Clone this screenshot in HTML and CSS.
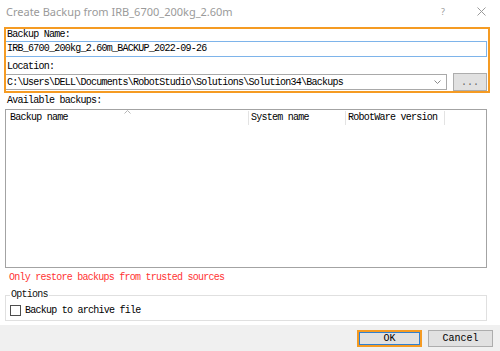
FILE: index.html
```html
<!DOCTYPE html>
<html>
<head>
<meta charset="utf-8">
<link rel="stylesheet" href="styles.css">
</head>
<body>
<div class="window">
  <header class="titlebar">
    <span class="title">Create Backup from IRB_6700_200kg_2.60m</span>
    <span class="help">?</span>
    <svg class="close" width="9" height="9" viewBox="0 0 9 9"><path d="M0.5 0.5L8.5 8.5M8.5 0.5L0.5 8.5" stroke="#9a9a9a" stroke-width="1" fill="none"/></svg>
  </header>
  <main class="content">
    <label class="lbl">Backup Name:</label>
    <div class="textbox">IRB_6700_200kg_2.60m_BACKUP_2022-09-26</div>
    <label class="lbl lbl-gap">Location:</label>
    <div class="loc-row">
      <div class="combo">
        <span class="combo-text">C:\Users\DELL\Documents\RobotStudio\Solutions\Solution34\Backups</span>
        <svg class="chev" width="7" height="4" viewBox="0 0 7 4"><path d="M0.5 0.5L3.5 3.5L6.5 0.5" stroke="#8a8a8a" stroke-width="1" fill="none"/></svg>
      </div>
      <button class="browse">...</button>
    </div>
    <label class="lbl lbl-gap">Available backups:</label>
    <div class="grid">
      <div class="grid-head">
        <div class="col col-name">Backup name
          <svg class="sort" width="7" height="4" viewBox="0 0 7 4"><path d="M0.5 3.5L3.5 0.5L6.5 3.5" stroke="#b5b5b5" stroke-width="1" fill="none"/></svg>
        </div>
        <div class="col col-sys">System name</div>
        <div class="col col-rw">RobotWare version</div>
      </div>
    </div>
    <p class="warning">Only restore backups from trusted sources</p>
    <fieldset class="options">
      <legend>Options</legend>
      <label class="check"><span class="box"></span>Backup to archive file</label>
    </fieldset>
  </main>
  <footer class="buttons">
    <button class="btn ok">OK</button>
    <button class="btn cancel">Cancel</button>
  </footer>
  <div class="highlight"></div>
</div>
</body>
</html>
```

FILE: styles.css
```css
* { box-sizing: border-box; }
html, body { margin: 0; padding: 0; }
body {
  width: 500px;
  height: 351px;
  background: #ffffff;
  font-family: "Liberation Mono", "DejaVu Sans Mono", monospace;
  font-size: 10px;
  letter-spacing: -0.75px;
  color: #000;
  overflow: hidden;
}
.window {
  position: relative;
  width: 500px;
  height: 351px;
  display: flex;
  flex-direction: column;
}
.titlebar {
  height: 22px;
  display: flex;
  align-items: center;
  padding: 0 14px 0 6px;
  font-family: "Noto Sans", "Open Sans", sans-serif;
  letter-spacing: 0;
  color: #9a9a9a;
}
.title { flex: 1; font-size: 11px; }
.help { font-size: 9px; margin-right: 32px; }
.close { display: block; }

.content {
  flex: 1;
  display: flex;
  flex-direction: column;
  padding: 7px 13px 0 5px;
}
.lbl {
  display: block;
  height: 12px;
  line-height: 12px;
  padding-left: 2px;
}
.lbl-gap { margin-top: 4px; }
.textbox {
  height: 16px;
  line-height: 14px;
  border: 1px solid #7eb4ea;
  padding-left: 1px;
}
.loc-row {
  height: 18px;
  display: flex;
  align-items: center;
  gap: 6px;
}
.combo {
  width: 442px;
  height: 16px;
  border: 1px solid #a9a9a9;
  display: flex;
  align-items: center;
  padding: 0 5px 0 1px;
}
.combo-text { flex: 1; }
.chev { display: block; }
.browse {
  width: 34px;
  height: 18px;
  margin: 0;
  padding: 0;
  border: 1px solid #adadad;
  background: #e1e1e1;
  font: inherit;
  color: #666;
  letter-spacing: 0;
}
.grid {
  margin-top: 2px;
  height: 159px;
  width: 482px;
  border: 1px solid #a3a3a3;
}
.grid-head {
  display: flex;
  height: 17px;
  padding-top: 1px;
}
.col {
  position: relative;
  height: 14px;
  line-height: 14px;
  border-right: 1px solid #e3e3e3;
  white-space: nowrap;
}
.col-name { width: 243px; padding-left: 4px; }
.col-sys { width: 97px; padding-left: 2px; }
.col-rw { width: 99px; padding-left: 2px; }
.sort {
  position: absolute;
  top: -1px;
  left: 118px;
  display: block;
}
.warning {
  margin: 4px 0 0 0;
  height: 12px;
  line-height: 12px;
  padding-left: 4px;
  color: #ff3333;
}
.options {
  margin: 5px 0 0 0;
  padding: 3px 0 4px 4px;
  width: 482px;
  border: 1px solid #e0e0e0;
}
.options legend {
  padding: 0 1px;
  margin-left: 0;
  line-height: 12px;
  color: #111;
}
.check {
  display: flex;
  align-items: center;
  height: 12px;
}
.box {
  width: 11px;
  height: 11px;
  border: 1px solid #4d4d4d;
  background: #fff;
  margin-right: 4px;
}
.buttons {
  height: 26px;
  background: #f0f0f0;
  display: flex;
  justify-content: flex-end;
  align-items: center;
  gap: 6px;
  padding-right: 7px;
}
.btn {
  width: 65px;
  height: 17px;
  margin: 0;
  padding: 0;
  background: #e1e1e1;
  font: inherit;
  color: #000;
}
.ok {
  border: 2px solid #f59b23;
  box-shadow: inset 0 0 0 1px #2f7fd0;
}
.cancel {
  border: 1px solid #adadad;
}
.highlight {
  position: absolute;
  left: 4px;
  top: 27px;
  width: 486px;
  height: 66px;
  border: 2px solid #f59b23;
  pointer-events: none;
}
```
